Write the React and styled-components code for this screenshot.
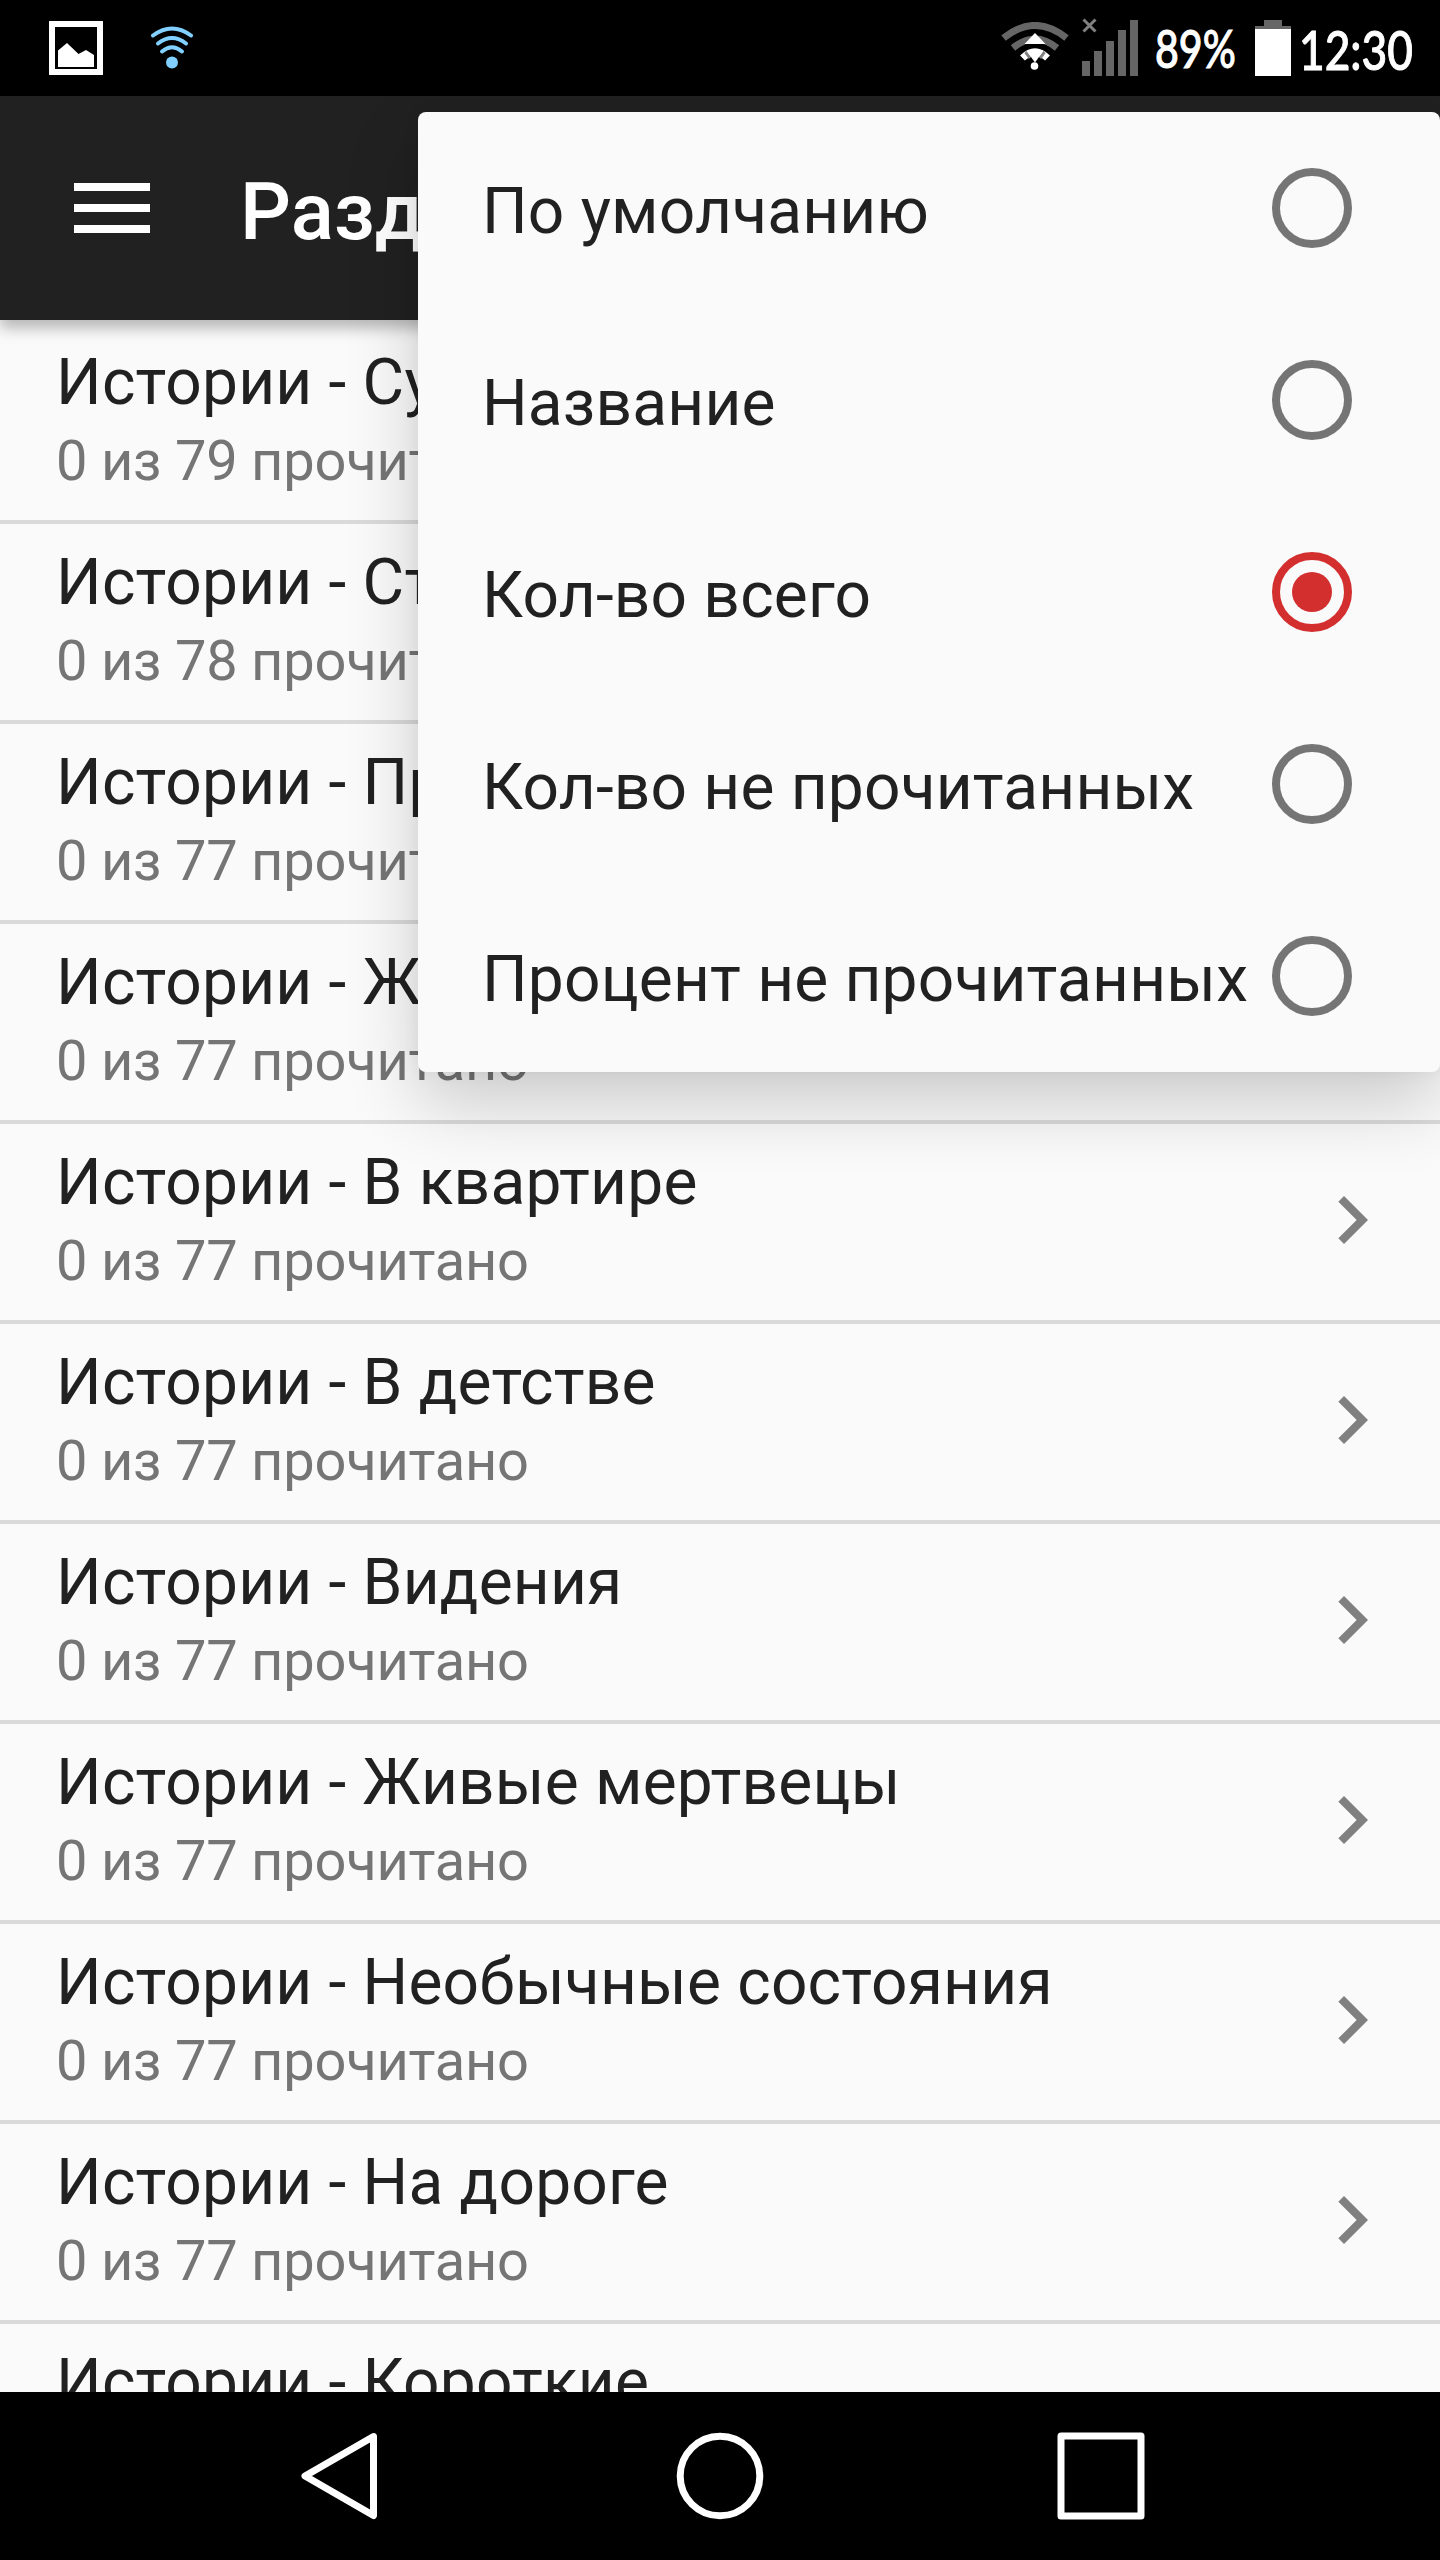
import React from 'react';
import styled, { createGlobalStyle } from 'styled-components';

const SECTIONS = [
  { title: 'Истории - Существа', total: 79 },
  { title: 'Истории - Страшные', total: 78 },
  { title: 'Истории - Призраки', total: 77 },
  { title: 'Истории - Животные', total: 77 },
  { title: 'Истории - В квартире', total: 77 },
  { title: 'Истории - В детстве', total: 77 },
  { title: 'Истории - Видения', total: 77 },
  { title: 'Истории - Живые мертвецы', total: 77 },
  { title: 'Истории - Необычные состояния', total: 77 },
  { title: 'Истории - На дороге', total: 77 },
  { title: 'Истории - Короткие', total: 77 },
];

const SORT_OPTIONS = [
  'По умолчанию',
  'Название',
  'Кол-во всего',
  'Кол-во не прочитанных',
  'Процент не прочитанных',
];

const App = () => {
  const [sortBy, setSortBy] = React.useState('Кол-во всего');

  return (
    <Screen>
      <GlobalStyle />
      <StatusBar />
      <AppBar>
        <MenuButton aria-label="Меню">
          <Line />
          <Line />
          <Line />
        </MenuButton>
        <Title>Разделы</Title>
      </AppBar>
      <List>
        {SECTIONS.map(({ title, total }) => (
          <Row key={title}>
            <RowText>
              <RowTitle>{title}</RowTitle>
              <RowCount>0 из {total} прочитано</RowCount>
            </RowText>
            <Chevron viewBox="0 0 24 24">
              <path d="M10 6L8.59 7.41 13.17 12l-4.58 4.59L10 18l6-6z" />
            </Chevron>
          </Row>
        ))}
      </List>
      <SortMenu role="menu">
        {SORT_OPTIONS.map((option) => (
          <Option
            key={option}
            role="menuitemradio"
            aria-checked={option === sortBy}
            onClick={() => setSortBy(option)}
          >
            <OptionLabel>{option}</OptionLabel>
            <Radio $checked={option === sortBy} />
          </Option>
        ))}
      </SortMenu>
      <NavBar>
        <NavIcon viewBox="0 0 88 88">
          <path d="M78.500 4.500L10 44L78.500 83.500Z" />
        </NavIcon>
        <NavIcon viewBox="0 0 88 88">
          <circle cx="44" cy="44" r="39.800" />
        </NavIcon>
        <NavIcon viewBox="0 0 88 88">
          <rect x="4" y="4" width="80" height="80" />
        </NavIcon>
      </NavBar>
    </Screen>
  );
};

const StatusBar = () => (
  <Status>
    <PictureIcon viewBox="0 0 54 54">
      <rect x="3" y="3" width="48" height="48" fill="none" stroke="#fff" strokeWidth="6" />
      <path d="M9 46V29.500L18 22L29.500 33L37 29L45 34V46Z" fill="#fff" />
    </PictureIcon>
    <HotspotIcon viewBox="0 0 42 44">
      <g fill="none" stroke="#81d0ff" strokeWidth="4" strokeLinecap="round">
        <path d="M2 9.500Q21 -4.500 40 9.500" />
        <path d="M7 17.500Q21 6.500 35 17.500" />
        <path d="M11 25.500Q21 17 31 25.500" />
      </g>
      <circle cx="21" cy="36.500" r="6" fill="#81d0ff" />
    </HotspotIcon>
    <WifiIcon viewBox="0 0 68 50">
      <g fill="none" stroke="#666" strokeWidth="7">
        <path d="M2.500 16Q34 -9 65.500 16" />
        <path d="M12 26Q34 8 56 26" />
      </g>
      <path d="M34 11L44.500 22H23.500Z" fill="#fff" />
      <path d="M21.500 36Q34 24 46.500 36" fill="none" stroke="#fff" strokeWidth="7" />
      <path d="M24.500 30L29 36M43.500 30L39 36" stroke="#808080" strokeWidth="3" />
      <path d="M26 29.500Q34 26.500 42 29.500L34 40.500Z" fill="#fff" />
      <circle cx="33.500" cy="44" r="3.800" fill="#fff" />
    </WifiIcon>
    <SignalIcon viewBox="0 0 56 58">
      <path d="M1.500 1.500L13.500 13.500M13.500 1.500L1.500 13.500" stroke="#808080" strokeWidth="3" />
      <path
        d="M0 43h8v15h-8zM12 33h8v25h-8zM24 23h8v35h-8zM36 12h8v46h-8zM48 2h8v56h-8z"
        fill="#666"
      />
    </SignalIcon>
    <Battery>89%</Battery>
    <BatteryIcon viewBox="0 0 36 56">
      <path d="M9 0h18v6h9v3H0V6h9z" fill="#666" />
      <path d="M0 9h36v47H0z" fill="#fff" />
    </BatteryIcon>
    <Clock>12:30</Clock>
  </Status>
);

const GlobalStyle = createGlobalStyle`
  body {
    margin: 0;
    background: #fafafa;
  }
`;

const Screen = styled.div`
  position: relative;
  width: 1440px;
  height: 2560px;
  display: flex;
  flex-direction: column;
  overflow: hidden;
  background: #fafafa;
  color: #212121;
  font-family: Roboto, sans-serif;
`;

const Status = styled.div`
  flex: 0 0 96px;
  z-index: 3;
  box-sizing: border-box;
  display: flex;
  align-items: flex-start;
  padding-left: 49px;
  background: #000;
  color: #fff;
`;

const PictureIcon = styled.svg`
  flex: none;
  width: 54px;
  height: 54px;
  margin-top: 21px;
`;

const HotspotIcon = styled.svg`
  flex: none;
  width: 42px;
  height: 44px;
  margin: 26px 0 0 48px;
`;

const WifiIcon = styled.svg`
  flex: none;
  width: 68px;
  height: 50px;
  margin: 22px 0 0 808px;
`;

const SignalIcon = styled.svg`
  flex: none;
  width: 56px;
  height: 58px;
  margin: 18px 0 0 13px;
`;

const StatusText = styled.span`
  flex: none;
  font-family: Lato, sans-serif;
  font-weight: 500;
  line-height: 60px;
  white-space: nowrap;
  transform-origin: left;
  -webkit-text-stroke: 1px #fff;
`;

const Battery = styled(StatusText)`
  width: 98px;
  margin: 18px 0 0 17px;
  font-size: 52px;
  transform: scaleX(0.79);
`;

const BatteryIcon = styled.svg`
  flex: none;
  width: 36px;
  height: 56px;
  margin: 20px 0 0 2px;
`;

const Clock = styled(StatusText)`
  margin: 20px 0 0 8px;
  font-size: 54px;
  transform: scaleX(0.82);
`;

const AppBar = styled.header`
  flex: 0 0 224px;
  z-index: 1;
  display: flex;
  align-items: center;
  background: #212121;
  box-shadow: 0 8px 14px rgba(0, 0, 0, 0.28);
`;

const MenuButton = styled.button`
  display: flex;
  flex-direction: column;
  gap: 13px;
  width: 76px;
  margin: 0 90px 0 74px;
  padding: 0;
  border: none;
  background: none;
`;

const Line = styled.span`
  height: 8px;
  background: #fff;
`;

const Title = styled.h1`
  margin: 8px 0 0;
  color: #fff;
  font-size: 80px;
  font-weight: 500;
  line-height: 94px;
`;

const List = styled.ul`
  flex: 1;
  min-height: 0;
  margin: 0;
  padding: 4px 0 0;
  overflow: hidden;
  list-style: none;
`;

const Row = styled.li`
  box-sizing: border-box;
  height: 200px;
  display: flex;
  justify-content: space-between;
  padding: 21px 40px 0 56px;
  border-bottom: 4px solid #dadada;
`;

const RowText = styled.div`
  display: flex;
  flex-direction: column;
  gap: 7px;
`;

const RowTitle = styled.div`
  font-size: 64px;
  line-height: 76px;
  letter-spacing: 0.22px;
`;

const RowCount = styled.div`
  color: #757575;
  font-size: 56px;
  line-height: 66px;
  letter-spacing: -0.22px;
`;

const Chevron = styled.svg`
  width: 96px;
  height: 96px;
  margin-top: 27px;
  fill: #808080;
`;

const SortMenu = styled.div`
  position: absolute;
  z-index: 2;
  top: 112px;
  right: 0;
  width: 1022px;
  border-radius: 8px;
  background: #fafafa;
  box-shadow: 0 32px 72px rgba(0, 0, 0, 0.19), 0 0 16px rgba(0, 0, 0, 0.06);
`;

const Option = styled.div`
  height: 192px;
  display: flex;
  align-items: center;
  justify-content: space-between;
  padding: 0 88px 0 64px;
`;

const OptionLabel = styled.span`
  padding-top: 6px;
  font-size: 64px;
  letter-spacing: 0.2px;
  white-space: nowrap;
`;

const Radio = styled.span`
  flex: none;
  box-sizing: border-box;
  width: 80px;
  height: 80px;
  display: grid;
  place-items: center;
  border: 8px solid ${(p) => (p.$checked ? '#d32f2f' : '#757575')};
  border-radius: 50%;

  &::after {
    content: '';
    width: 40px;
    height: 40px;
    border-radius: 50%;
    background: ${(p) => (p.$checked ? '#d32f2f' : 'transparent')};
  }
`;

const NavBar = styled.nav`
  flex: 0 0 168px;
  z-index: 3;
  display: flex;
  align-items: center;
  justify-content: center;
  gap: 293px;
  background: #000;
`;

const NavIcon = styled.svg`
  flex: none;
  width: 88px;
  height: 88px;
  fill: none;
  stroke: #fff;
  stroke-width: 7;
  stroke-linejoin: round;
`;

export default App;
